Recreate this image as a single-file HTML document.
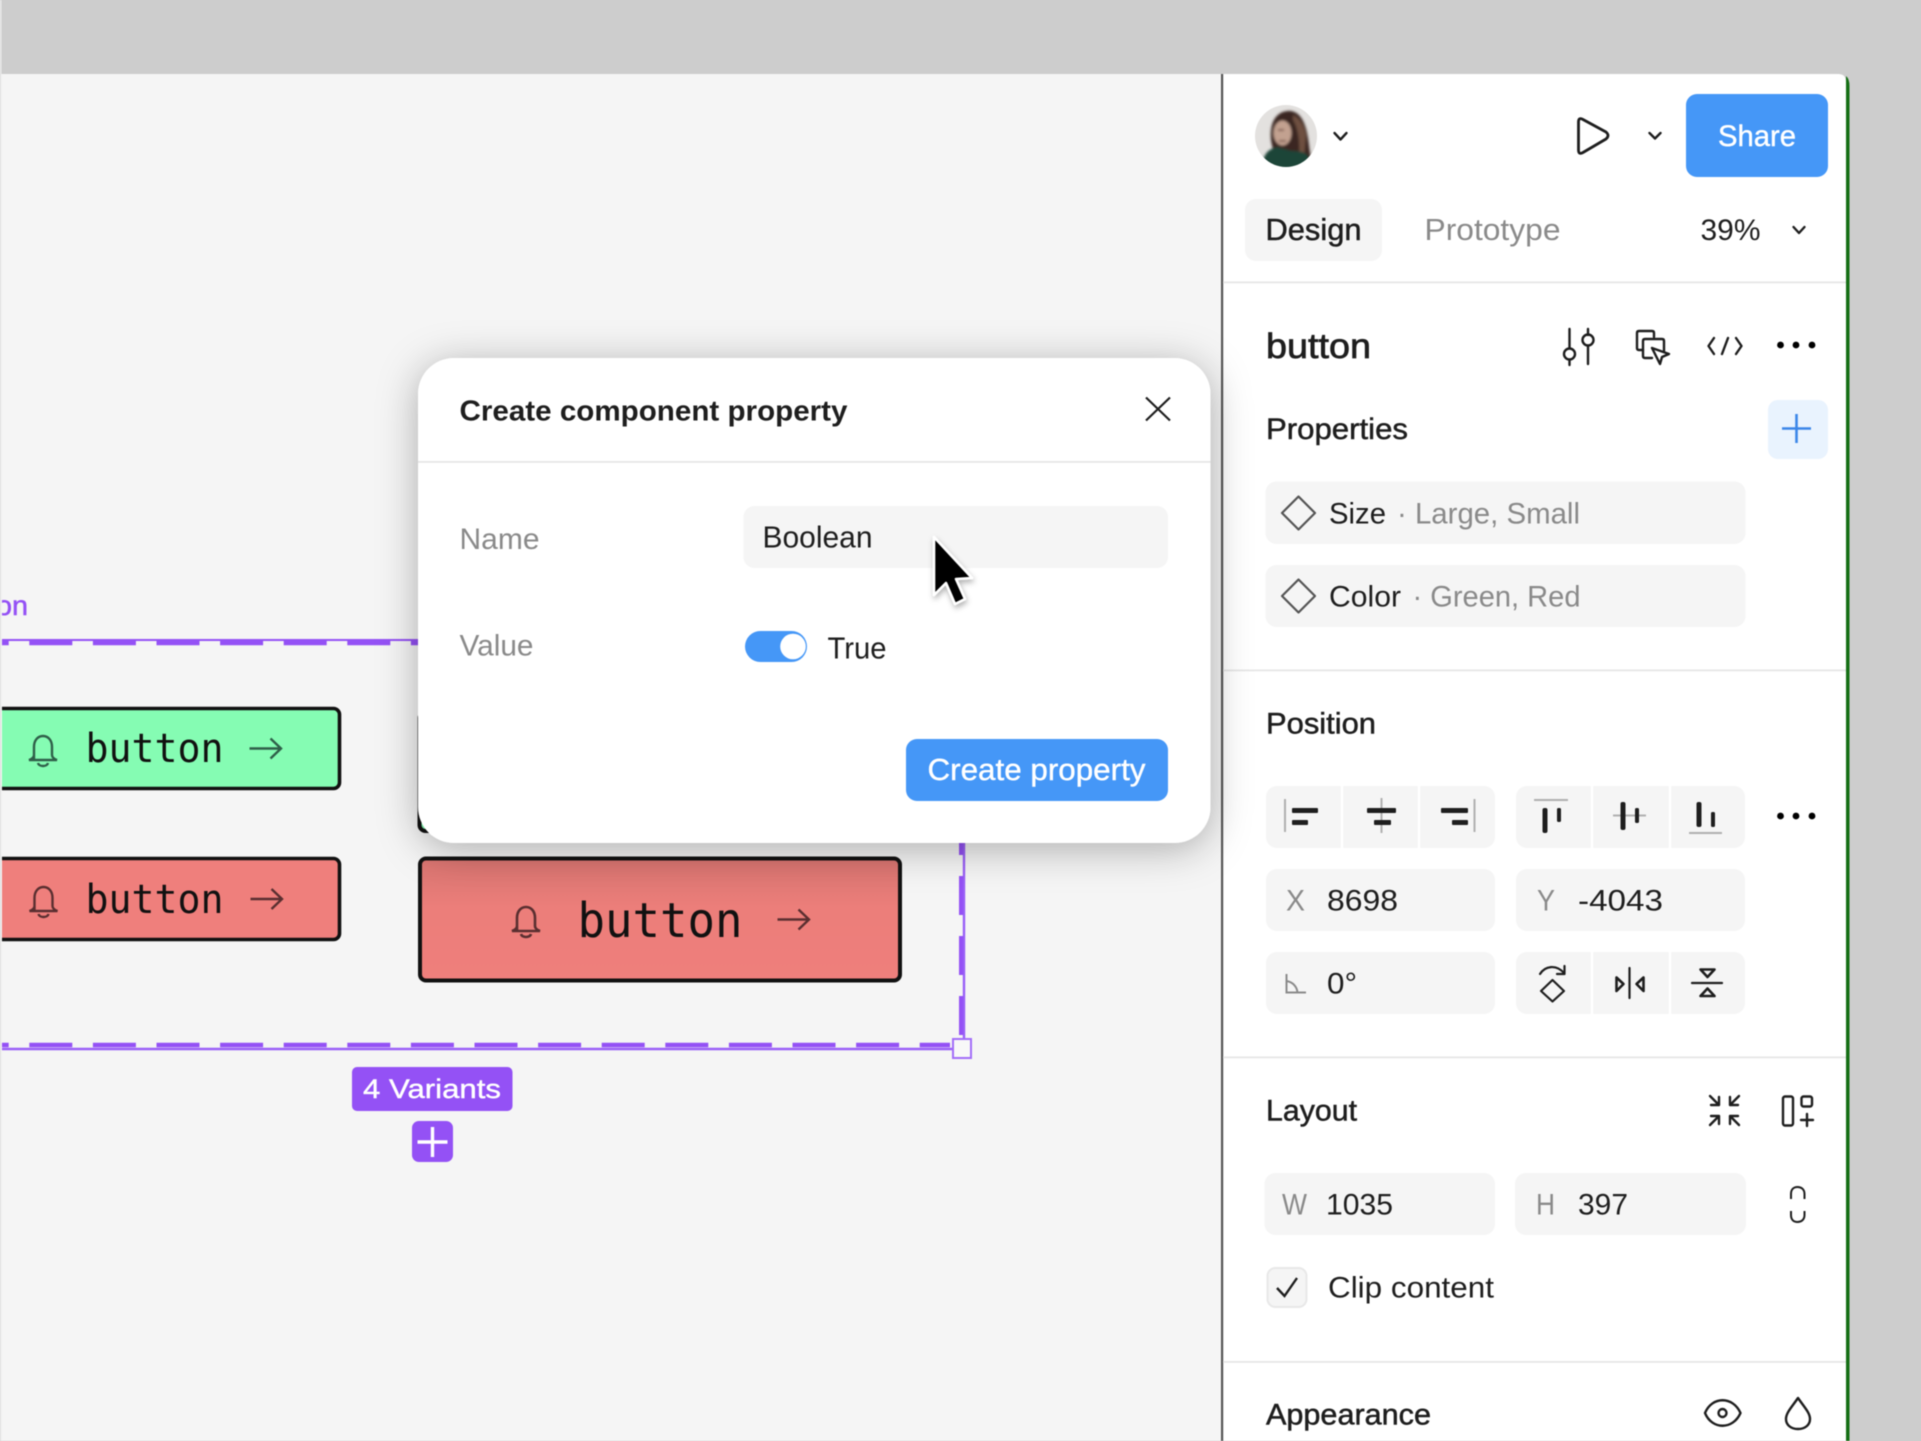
<!DOCTYPE html>
<html><head><meta charset="utf-8"><title>Create component property</title>
<style>
html,body{margin:0;padding:0;background:#cdcdcd;width:1921px;height:1441px;overflow:hidden}
svg{display:block;filter:blur(.6px)}
text{font-family:"Liberation Sans",sans-serif;fill:#1e1e1e}
.m{stroke:#1e1e1e;stroke-width:.5px}
.b{font-weight:700}
.g{fill:#8a8a8a}
.w{fill:#fff;stroke:#fff;stroke-width:.4px}
.mono{font-family:"DejaVu Sans Mono","Liberation Mono",monospace;fill:#111}
.ic{fill:none;stroke:#1e1e1e;stroke-width:2.4;stroke-linecap:round;stroke-linejoin:round}
.bar{fill:#1e1e1e}
.gl{stroke:#b0b0b0;stroke-width:2;fill:none}
.fld{fill:#f5f5f5}
.sep{stroke:#fff;stroke-width:2.5}
</style></head><body>
<svg width="1921" height="1441" viewBox="0 0 1921 1441" xmlns="http://www.w3.org/2000/svg">
<defs>
<clipPath id="av"><circle cx="1286" cy="136" r="31"/></clipPath>
<clipPath id="cv"><rect x="2" y="74" width="1219" height="1367"/></clipPath>
<filter id="sh" x="-30%" y="-30%" width="160%" height="160%"><feDropShadow dx="0" dy="6" stdDeviation="20" flood-color="#000" flood-opacity=".3"/></filter>
<filter id="csh" x="-50%" y="-50%" width="200%" height="200%"><feDropShadow dx="1" dy="3" stdDeviation="3" flood-color="#000" flood-opacity=".3"/></filter>
<filter id="avb"><feGaussianBlur stdDeviation="1.3"/></filter>
<linearGradient id="rd" x1="0" y1="0" x2="0" y2="1"><stop offset="0" stop-color="#d87470"/><stop offset=".4" stop-color="#ec7e7a"/><stop offset="1" stop-color="#ef7f7c"/></linearGradient>
<g id="bell"><path d="M-9 12V0C-9-7-5-11 0-11S9-7 9 0V8C9 10 11 12 14 13H-14C-11 12-9 10-9 8" fill="none"/><path d="M-5 16C-4 20 4 20 5 16" fill="none"/></g>
</defs>

<!-- background -->
<rect width="1921" height="1441" fill="#cdcdcd"/>
<rect x="0" y="0" width="1.500" height="1441" fill="#ececec"/>
<rect x="1.500" y="74" width="1225" height="1367" fill="#f5f5f5"/>

<g clip-path="url(#cv)">
<!-- purple label -->
<text x="-4" y="615" font-size="28" textLength="32" lengthAdjust="spacingAndGlyphs" style="fill:#9451f5;stroke:#9451f5;stroke-width:.5px">on</text>

<!-- dashed frame -->
<path d="M0 640H420" stroke="#9451f5" stroke-width="2" fill="none"/>
<path d="M-34.3 643H420" stroke="#9451f5" stroke-width="4.5" stroke-dasharray="43 20.6" fill="none"/>
<path d="M0 1049H954Q963 1049 964 1040V840" stroke="#9a5ff7" stroke-width="2.4" fill="none"/>
<path d="M-34.3 1045H950" stroke="#9451f5" stroke-width="4.5" stroke-dasharray="43 20.6" fill="none"/>
<path d="M961 1035V826" stroke="#9451f5" stroke-width="4" stroke-dasharray="39 21" fill="none"/>
<rect x="953" y="1039" width="18" height="19" fill="#f8f8f8" stroke="#a36ef8" stroke-width="2"/>

<!-- hidden button behind dialog -->
<rect x="419.500" y="712" width="480" height="119" rx="6" fill="#85fcb3" stroke="#111" stroke-width="4"/>

<!-- green button -->
<rect x="-20" y="708.500" width="359.500" height="80" rx="6" fill="#85fcb3" stroke="#111" stroke-width="3.6"/>
<use href="#bell" x="43" y="747" stroke="#2f5f49" stroke-width="2.4"/>
<text class="mono" x="85.500" y="762" font-size="40" textLength="138" lengthAdjust="spacingAndGlyphs">button</text>
<path d="M249.500 748.500H280.500M270.500 738.500L281 748.500L270.500 758.500" fill="none" stroke="#2f5f49" stroke-width="2.4"/>

<!-- red button -->
<rect x="-20" y="858.500" width="359.500" height="81" rx="6" fill="#ef7f7c" stroke="#111" stroke-width="3.6"/>
<use href="#bell" x="43.500" y="898" stroke="#5a2f30" stroke-width="2.4"/>
<text class="mono" x="85.500" y="913" font-size="40" textLength="138" lengthAdjust="spacingAndGlyphs">button</text>
<path d="M250.500 899H281.500M271.500 889L282 899L271.500 909" fill="none" stroke="#5a2f30" stroke-width="2.4"/>

<!-- big red button -->
<rect x="420" y="858.500" width="480" height="122" rx="6" fill="url(#rd)" stroke="#111" stroke-width="4"/>
<use href="#bell" x="526" y="918" stroke="#5a2f30" stroke-width="2.6"/>
<text class="mono" x="577.500" y="937" font-size="48" textLength="165" lengthAdjust="spacingAndGlyphs">button</text>
<path d="M777.500 919.500H808.500M798.500 909.500L809 919.500L798.500 929.500" fill="none" stroke="#5a2f30" stroke-width="2.4"/>

<!-- 4 variants -->
<rect x="352" y="1067" width="160.500" height="44" rx="5" fill="#9451f5"/>
<text class="w" x="363" y="1098" font-size="26.500" textLength="138" lengthAdjust="spacingAndGlyphs">4 Variants</text>
<rect x="412" y="1121" width="41" height="41" rx="7" fill="#9451f5"/>
<path d="M417.500 1142H447.500M432.500 1127V1157" stroke="#fff" stroke-width="3.4" fill="none"/>
</g>

<!-- right panel -->
<path d="M1221 74H1838Q1846 74 1846 82V1441H1221Z" fill="#fff"/>
<rect x="1221" y="74" width="2.200" height="1367" fill="#555"/>
<path d="M1846 76Q1849.500 79 1849.500 86V1441H1846Z" fill="#156f15"/>

<!-- avatar -->
<g clip-path="url(#av)">
<rect x="1255" y="105" width="63" height="63" fill="#e3e1df"/>
<g filter="url(#avb)">
<path d="M1271 140C1269 118 1280 110 1291 111C1303 113 1307 128 1309 145C1310 155 1313 162 1308 167L1278 160C1273 152 1272 146 1271 140Z" fill="#3a2720"/>
<ellipse cx="1282.500" cy="133" rx="9" ry="12.500" fill="#c2a190"/>
<path d="M1293 120C1298 128 1300 142 1299 154L1304 158L1306 135C1304 124 1299 118 1293 115Z" fill="#6e5040"/>
<path d="M1278 130H1284M1279 141H1286" stroke="#6b4a3e" stroke-width="1.600"/>
<path d="M1262 170C1262 155 1268 149 1277 147L1292 151C1303 151 1311 152 1312 170Z" fill="#1c4439"/>
</g>
</g>
<path class="ic" d="M1334.500 133L1340.500 139.500L1346.500 133" stroke-width="3"/>

<!-- play -->
<path d="M1578.500 122Q1578.500 117 1583 119.500L1606 132Q1610 135.500 1606 139L1583 152.500Q1578.500 155 1578.500 150Z" fill="none" stroke="#1e1e1e" stroke-width="2.800" stroke-linejoin="round"/>
<path class="ic" d="M1649.500 133L1655 138.500L1660.500 133" stroke-width="2.800"/>
<rect x="1686" y="94" width="142" height="83" rx="11" fill="#4597f7"/>
<text class="w" x="1718" y="146" font-size="30" textLength="78" lengthAdjust="spacingAndGlyphs">Share</text>

<!-- tabs -->
<rect x="1245" y="199" width="137" height="62" rx="11" fill="#f5f5f5"/>
<text class="m" x="1265.500" y="240" font-size="30.500" textLength="96" lengthAdjust="spacingAndGlyphs">Design</text>
<text class="g" x="1424.500" y="240" font-size="30.500" textLength="136" lengthAdjust="spacingAndGlyphs">Prototype</text>
<text x="1700.500" y="240" font-size="30" textLength="60" lengthAdjust="spacingAndGlyphs">39%</text>
<path class="ic" d="M1793.500 227L1799 233L1804.500 227"/>
<rect x="1223" y="281.500" width="623" height="1.800" fill="#e6e6e6"/>

<!-- button title row -->
<text class="m" x="1266" y="358" font-size="35" textLength="105" lengthAdjust="spacingAndGlyphs" style="stroke-width:.7px">button</text>
<!-- sliders icon -->
<g class="ic" stroke-width="2.600"><path d="M1569.500 329V348M1569.500 360V365M1588 329V335M1588 346V364"/><circle cx="1569.500" cy="354" r="5.500"/><circle cx="1588" cy="340" r="5.500"/></g>
<!-- component cursor icon -->
<g class="ic"><path d="M1654 337V333Q1654 331 1652 331H1639Q1637 331 1637 333V348Q1637 350 1639 350H1643"/><path d="M1664 352V341Q1664 339 1662 339H1645Q1643 339 1643 341V356Q1643 358 1645 358H1652"/><path d="M1652 348L1669 354L1662 357L1660 364Z" fill="#fff"/></g>
<!-- code icon -->
<g class="ic" stroke-width="2.200"><path d="M1714 338L1708.500 346L1714 354M1736 338L1741.500 346L1736 354M1728 338L1722 354"/></g>
<!-- dots -->
<circle cx="1780.500" cy="345" r="3.400"/><circle cx="1796" cy="345" r="3.400"/><circle cx="1812" cy="345" r="3.400"/>

<!-- properties -->
<text class="m" x="1266" y="439" font-size="30" textLength="142" lengthAdjust="spacingAndGlyphs">Properties</text>
<rect x="1768" y="400" width="60" height="59" rx="10" fill="#e9f3fe"/>
<path d="M1782 428.500H1811M1796.500 414V443" stroke="#3b86e8" stroke-width="2.600" fill="none"/>

<rect class="fld" x="1265.500" y="481.500" width="480" height="62.500" rx="11"/>
<path d="M1298.500 496.500L1315 513L1298.500 529.500L1282 513Z" fill="none" stroke="#555" stroke-width="2.200" stroke-linejoin="round"/>
<text x="1329" y="523.500" font-size="30" textLength="57" lengthAdjust="spacingAndGlyphs">Size</text>
<text class="g" x="1397" y="523.500" font-size="30" textLength="183" lengthAdjust="spacingAndGlyphs">· Large, Small</text>

<rect class="fld" x="1265.500" y="565" width="480" height="62" rx="11"/>
<path d="M1298.500 579.500L1315 596L1298.500 612.500L1282 596Z" fill="none" stroke="#555" stroke-width="2.200" stroke-linejoin="round"/>
<text x="1329" y="606.500" font-size="30" textLength="72" lengthAdjust="spacingAndGlyphs">Color</text>
<text class="g" x="1412.500" y="606.500" font-size="30" textLength="168" lengthAdjust="spacingAndGlyphs">· Green, Red</text>
<rect x="1223" y="669.500" width="623" height="1.800" fill="#e6e6e6"/>

<!-- position -->
<text class="m" x="1266" y="733.500" font-size="30" textLength="110" lengthAdjust="spacingAndGlyphs">Position</text>

<rect class="fld" x="1266" y="786" width="229" height="62" rx="11"/>
<rect class="fld" x="1516" y="786" width="229" height="62" rx="11"/>
<path class="sep" d="M1342 786V848M1419 786V848M1592 786V848M1670 786V848"/>
<path class="gl" d="M1285 799V832"/><rect class="bar" x="1292" y="808" width="26" height="5" rx="1"/><rect class="bar" x="1292" y="820" width="16" height="5" rx="1"/>
<path class="gl" d="M1381.500 798V833"/><rect class="bar" x="1367" y="808" width="29" height="5" rx="1"/><rect class="bar" x="1374" y="820" width="17" height="5" rx="1"/>
<path class="gl" d="M1474.500 799V832"/><rect class="bar" x="1441" y="808" width="27" height="5" rx="1"/><rect class="bar" x="1452" y="820" width="16" height="5" rx="1"/>
<path class="gl" d="M1534 800H1568"/><rect class="bar" x="1542.500" y="808" width="5" height="25" rx="2"/><rect class="bar" x="1557" y="808" width="4" height="14" rx="1.500"/>
<path class="gl" d="M1613 815.500H1646"/><rect class="bar" x="1620.500" y="802" width="5" height="28" rx="2"/><rect class="bar" x="1635" y="808" width="4" height="15" rx="1.500"/>
<path class="gl" d="M1689 833H1722"/><rect class="bar" x="1696.500" y="802" width="5" height="25" rx="2"/><rect class="bar" x="1711" y="812" width="4" height="15" rx="1.500"/>
<circle cx="1780.500" cy="816" r="3.400"/><circle cx="1796" cy="816" r="3.400"/><circle cx="1812" cy="816" r="3.400"/>

<rect class="fld" x="1266" y="869" width="229" height="62" rx="11"/>
<rect class="fld" x="1516" y="869" width="229" height="62" rx="11"/>
<text class="g" x="1286" y="910.500" font-size="30" textLength="19" lengthAdjust="spacingAndGlyphs">X</text>
<text x="1327" y="910.500" font-size="30" textLength="71" lengthAdjust="spacingAndGlyphs">8698</text>
<text class="g" x="1537" y="910.500" font-size="30" textLength="18" lengthAdjust="spacingAndGlyphs">Y</text>
<text x="1578" y="910.500" font-size="30" textLength="85" lengthAdjust="spacingAndGlyphs">-4043</text>

<rect class="fld" x="1266" y="952" width="229" height="62" rx="11"/>
<path d="M1286.500 974V992.500H1306M1286.500 981C1293 982 1297 987 1297.500 992.500" fill="none" stroke="#8a8a8a" stroke-width="2"/>
<text x="1327" y="993.500" font-size="30" textLength="30" lengthAdjust="spacingAndGlyphs">0°</text>

<rect class="fld" x="1516" y="952" width="229" height="62" rx="11"/>
<path class="sep" d="M1592 952V1014M1670 952V1014"/>
<!-- rotate -->
<g class="ic"><path d="M1540 974C1545 966 1556 964 1564 973M1564.500 966V974H1557" stroke-width="2.200"/><path d="M1552.500 980L1564 991L1552.500 1001.500L1541 991Z" stroke-width="2.200"/></g>
<!-- flip h -->
<g class="ic"><path d="M1629.500 968V998" stroke-width="2.200"/><path d="M1616.500 977.500V991L1623.500 984Z" stroke-width="2.600"/><path d="M1643.500 977.500V991L1636.500 984Z" stroke-width="2.600"/></g>
<!-- flip v -->
<g class="ic"><path d="M1692 983H1722" stroke-width="2.200"/><path d="M1700.500 969.500H1714.500L1707.500 977Z" stroke-width="2.600"/><path d="M1700.500 996H1714.500L1707.500 988.500Z" stroke-width="2.600"/></g>
<rect x="1223" y="1056.500" width="623" height="1.800" fill="#e6e6e6"/>

<!-- layout -->
<text class="m" x="1266" y="1120.500" font-size="30" textLength="91" lengthAdjust="spacingAndGlyphs">Layout</text>
<g class="ic" stroke-width="2.400"><path d="M1710 1096L1719 1105M1719 1097V1105H1711M1739 1096L1730 1105M1730 1097V1105H1738M1710 1125L1719 1116M1719 1124V1116H1711M1739 1125L1730 1116M1730 1124V1116H1738"/></g>
<g class="ic"><rect x="1783" y="1096.500" width="10" height="29" rx="2"/><rect x="1801.500" y="1096.500" width="10.500" height="10" rx="2"/><path d="M1801 1120H1813M1807 1114V1126"/></g>

<rect class="fld" x="1264.500" y="1173" width="230.500" height="62" rx="11"/>
<rect class="fld" x="1515" y="1173" width="231" height="62" rx="11"/>
<text class="g" x="1282" y="1214.500" font-size="30" textLength="25" lengthAdjust="spacingAndGlyphs">W</text>
<text x="1326" y="1214.500" font-size="30" textLength="67" lengthAdjust="spacingAndGlyphs">1035</text>
<text class="g" x="1536" y="1214.500" font-size="30" textLength="19" lengthAdjust="spacingAndGlyphs">H</text>
<text x="1578" y="1214.500" font-size="30" textLength="50" lengthAdjust="spacingAndGlyphs">397</text>
<g fill="none" stroke="#1e1e1e" stroke-width="2"><path d="M1791 1199V1194C1791 1189 1794 1187 1797.500 1187S1804.500 1189 1804.500 1194V1199"/><path d="M1791 1211V1215C1791 1220 1794 1222 1797.500 1222S1804.500 1220 1804.500 1215V1211"/></g>

<rect x="1267.500" y="1268" width="39" height="39" rx="8" fill="#f5f5f5" stroke="#e8e8e8" stroke-width="2"/>
<path d="M1277 1288L1284.500 1296L1297 1278" fill="none" stroke="#1e1e1e" stroke-width="2.400"/>
<text x="1328" y="1297.500" font-size="30" textLength="166" lengthAdjust="spacingAndGlyphs">Clip content</text>
<rect x="1223" y="1361" width="623" height="1.800" fill="#e6e6e6"/>

<!-- appearance -->
<text class="m" x="1266" y="1424.500" font-size="30" textLength="165" lengthAdjust="spacingAndGlyphs">Appearance</text>
<g class="ic"><path d="M1705 1413C1712 1396 1733 1396 1740.500 1413C1733 1430 1712 1430 1705 1413Z"/><circle cx="1722.500" cy="1413" r="4"/></g>
<path class="ic" d="M1798 1398C1791 1408 1786 1413 1786 1419C1786 1425 1791 1429 1798 1429S1810 1425 1810 1419C1810 1413 1805 1408 1798 1398Z"/>

<!-- dialog -->
<rect x="418" y="358" width="792.500" height="485" rx="36" fill="#fff" filter="url(#sh)"/>
<text class="b" x="459.500" y="420.500" font-size="29" textLength="388" lengthAdjust="spacingAndGlyphs">Create component property</text>
<path d="M1146 397.500L1170 420.500M1170 397.500L1146 420.500" fill="none" stroke="#1e1e1e" stroke-width="2.200"/>
<rect x="418" y="461" width="792.500" height="1.800" fill="#e6e6e6"/>

<text class="g" x="459.500" y="549" font-size="30" textLength="80" lengthAdjust="spacingAndGlyphs">Name</text>
<rect class="fld" x="743.500" y="506" width="424.500" height="62" rx="11"/>
<text x="762.500" y="547.500" font-size="30.500" textLength="110" lengthAdjust="spacingAndGlyphs">Boolean</text>

<text class="g" x="459.500" y="655.500" font-size="30" textLength="74" lengthAdjust="spacingAndGlyphs">Value</text>
<rect x="745" y="631" width="62" height="31" rx="15.500" fill="#4597f7"/>
<circle cx="793" cy="646.500" r="12.800" fill="#fff"/>
<text x="827.500" y="658.500" font-size="30.500" textLength="59" lengthAdjust="spacingAndGlyphs">True</text>

<rect x="906" y="739" width="262" height="62" rx="11" fill="#4597f7"/>
<text class="w" x="927.500" y="780" font-size="30.500" textLength="218" lengthAdjust="spacingAndGlyphs">Create property</text>

<!-- cursor -->
<path d="M934 537V595L946 583L955 604L965 599L956 579L972 578Z" fill="#000" stroke="#fff" stroke-width="2.600" stroke-linejoin="round" filter="url(#csh)"/>
</svg>
</body></html>
